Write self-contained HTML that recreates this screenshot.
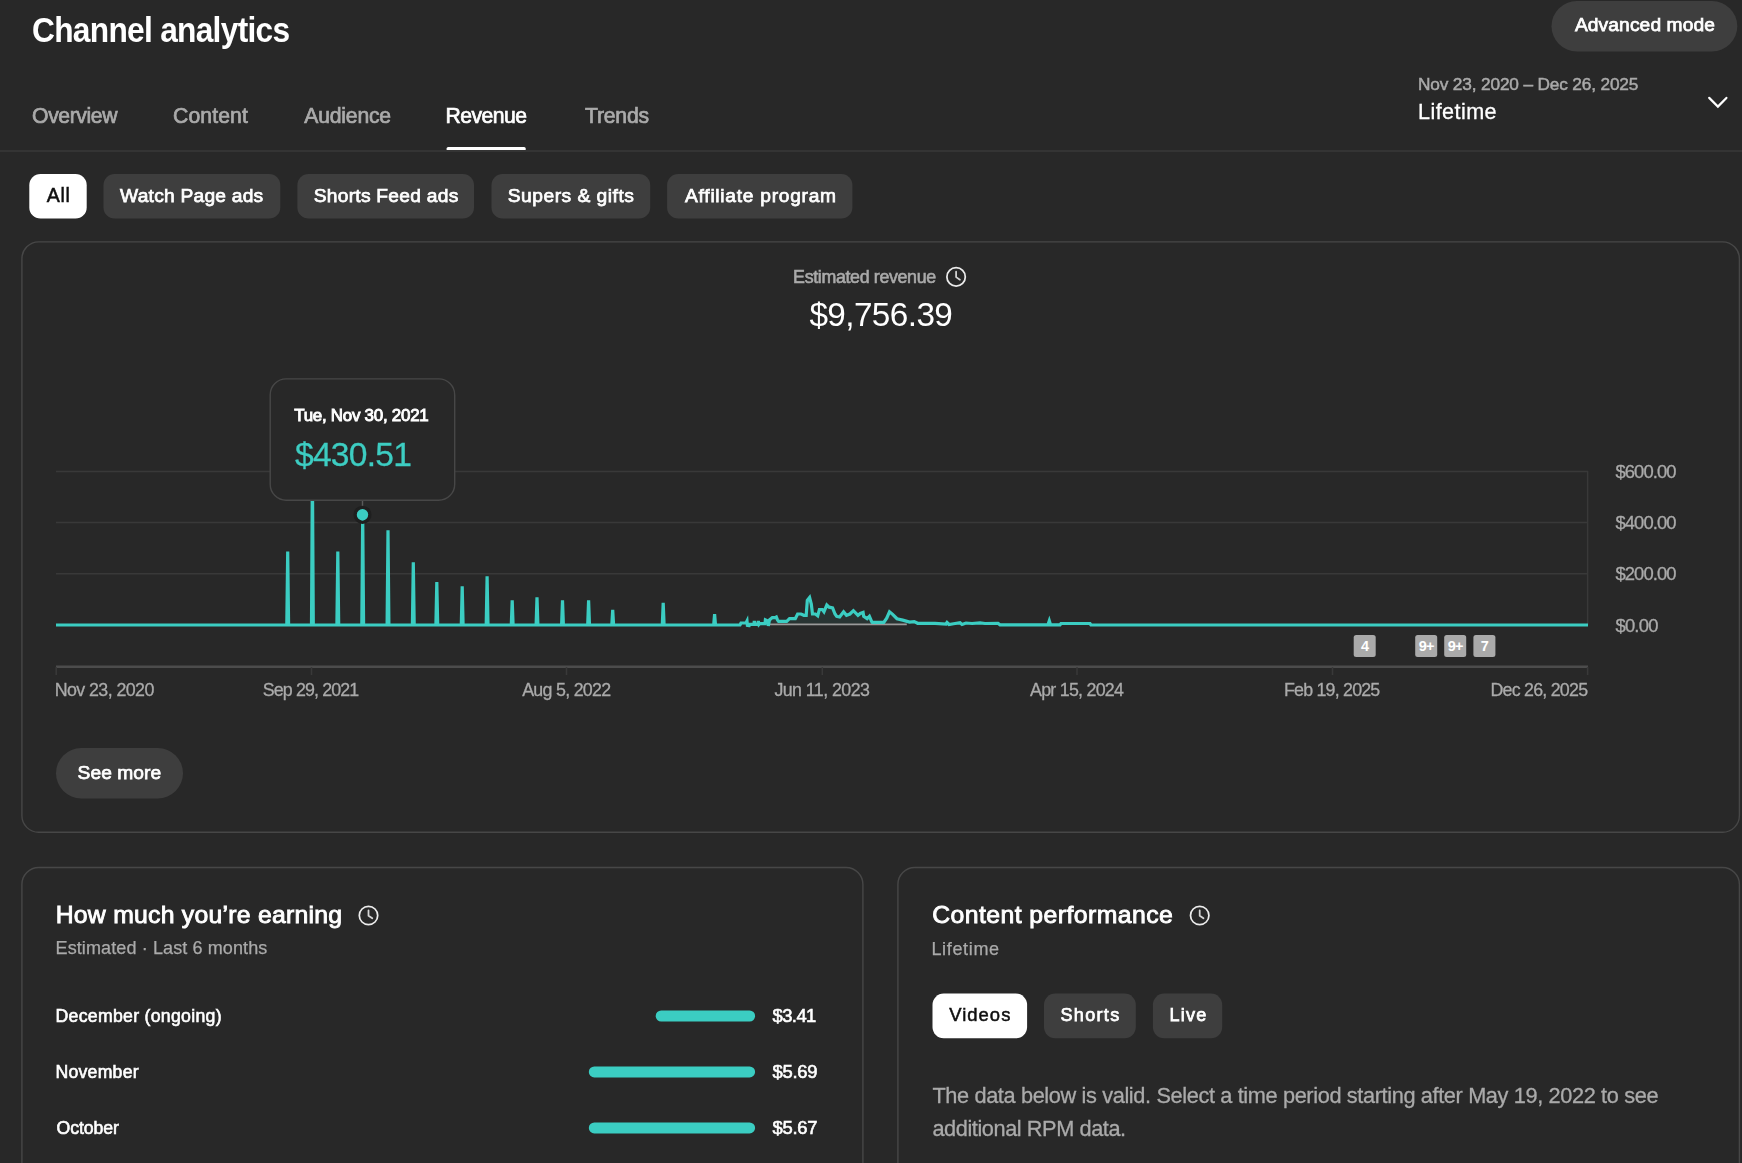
<!DOCTYPE html>
<html><head><meta charset="utf-8"><title>Channel analytics</title>
<style>
html,body{margin:0;padding:0}
body{width:1742px;height:1163px;overflow:hidden;background:#282828;position:relative;font-family:"Liberation Sans",sans-serif}
svg text{white-space:pre}
</style></head><body>
<svg width="1742" height="1163" style="position:absolute;left:0;top:0"><line x1="0" y1="151" x2="1742" y2="151" stroke="#383838" stroke-width="1.4"/><path d="M446.6,150 V148.6 Q446.6,147 448.2,147 H524.1 Q525.7,147 525.7,148.6 V150 Z" fill="#fff"/><rect x="29.3" y="174" width="57.4" height="44.6" rx="11.2" fill="#fff"/><rect x="103.5" y="174" width="176.8" height="44.6" rx="11.2" fill="#3e3e3e"/><rect x="297.4" y="174" width="176.6" height="44.6" rx="11.2" fill="#3e3e3e"/><rect x="491.5" y="174" width="158.7" height="44.6" rx="11.2" fill="#3e3e3e"/><rect x="667.1" y="174" width="185.3" height="44.6" rx="11.2" fill="#3e3e3e"/><rect x="1551.5" y="1" width="185.8" height="50.4" rx="25.2" fill="#3e3e3e"/><rect x="21.9" y="241.9" width="1717.5" height="590.4" rx="16.8" fill="none" stroke="#474747" stroke-width="1.4"/><rect x="21.9" y="867.5" width="841" height="420" rx="16.8" fill="none" stroke="#474747" stroke-width="1.4"/><rect x="897.9" y="867.5" width="841.5" height="420" rx="16.8" fill="none" stroke="#474747" stroke-width="1.4"/><rect x="56" y="748" width="127" height="50.4" rx="25.2" fill="#3e3e3e"/><rect x="655.7" y="1010.5" width="99.4" height="11" rx="5.5" fill="#3bcdc2"/><rect x="588.8" y="1066.4" width="166.3" height="11" rx="5.5" fill="#3bcdc2"/><rect x="588.8" y="1122.4" width="166.3" height="11" rx="5.5" fill="#3bcdc2"/><rect x="932.5" y="993.6" width="94.6" height="44.7" rx="11.2" fill="#fff"/><rect x="1044" y="993.6" width="91.8" height="44.7" rx="11.2" fill="#3e3e3e"/><rect x="1152.9" y="993.6" width="69.3" height="44.7" rx="11.2" fill="#3e3e3e"/><line x1="56" y1="471.4" x2="1588" y2="471.4" stroke="#393939" stroke-width="1.5"/><line x1="56" y1="522.6" x2="1588" y2="522.6" stroke="#393939" stroke-width="1.5"/><line x1="56" y1="573.8" x2="1588" y2="573.8" stroke="#393939" stroke-width="1.5"/><line x1="1587.6" y1="471" x2="1587.6" y2="625" stroke="#393939" stroke-width="1.4"/><line x1="56" y1="666.8" x2="1588" y2="666.8" stroke="#4c4c4c" stroke-width="2.4"/><line x1="56.2" y1="667" x2="56.2" y2="675" stroke="#393939" stroke-width="1.5"/><line x1="311.5" y1="667" x2="311.5" y2="675" stroke="#393939" stroke-width="1.5"/><line x1="566.5" y1="667" x2="566.5" y2="675" stroke="#393939" stroke-width="1.5"/><line x1="822.3" y1="667" x2="822.3" y2="675" stroke="#393939" stroke-width="1.5"/><line x1="1077" y1="667" x2="1077" y2="675" stroke="#393939" stroke-width="1.5"/><line x1="1332.5" y1="667" x2="1332.5" y2="675" stroke="#393939" stroke-width="1.5"/><line x1="1587.6" y1="667" x2="1587.6" y2="675" stroke="#393939" stroke-width="1.5"/><path d="M740,623.5 L740.0,625.0 L741.0,623.0 L746.0,623.0 L747.0,621.0 L747.5,626.7 L748.5,623.5 L748.8,626.7 L749.5,624.4 L754.0,624.4 L754.3,621.0 L755.0,624.4 L758.0,624.4 L758.3,621.0 L759.0,624.4 L759.8,623.6 L765.0,623.6 L765.4,619.9 L768.0,621.0 L768.3,626.0 L769.5,619.9 L772.3,617.6 L775.0,617.6 L776.3,617.0 L777.5,619.9 L778.6,621.3 L786.7,621.3 L789.5,618.7 L795.3,618.7 L797.6,614.0 L801.0,614.0 L803.9,615.3 L806.2,615.3 L807.3,600.3 L809.6,597.5 L811.3,604.0 L812.5,614.0 L815.4,614.0 L817.7,615.8 L819.4,609.5 L822.3,609.5 L824.0,611.8 L826.8,605.0 L829.1,607.2 L832.6,607.8 L835.0,614.0 L836.7,616.4 L839.6,617.0 L843.6,611.8 L846.5,615.3 L849.9,614.0 L853.4,610.7 L858.0,615.3 L860.3,613.5 L863.1,612.4 L863.7,616.4 L867.1,618.7 L869.4,616.4 L871.7,621.6 L872.3,622.4 L883.8,622.4 L886.7,618.1 L889.5,611.8 L892.4,614.1 L897.0,618.7 L902.7,620.1 L909.6,622.1 L914.2,621.6 L917.7,623.3 L935.0,623.3 L935.0,623.3 L946.0,624.0 L947.0,622.5 L949.0,624.5 L955.0,623.5 L960.0,622.8 L962.0,624.5 L966.0,623.0 L972.0,623.5 L980.0,622.8 L985.0,623.5 L998.0,623.3 L1000.0,624.8 L1048.0,624.8 L1049.3,620.8 L1050.5,624.8 L1060.0,624.8 L1061.0,623.5 L1090.0,623.5 L1091.0,625.0 L1091,623.5 Z" fill="#3bcdc2" fill-opacity="0.08"/><line x1="769.4" y1="624.4" x2="906.8" y2="624.4" stroke="#9a9a9a" stroke-width="1.6"/><path d="M56.0,625.0 L286.8,625.0 L287.7,551.4 L288.6,625.0 L311.5,625.0 L312.4,470.0 L313.3,625.0 L336.9,625.0 L337.8,551.4 L338.7,625.0 L361.8,625.0 L362.7,515.0 L363.6,625.0 L387.1,625.0 L388.0,530.3 L388.9,625.0 L412.4,625.0 L413.3,562.2 L414.2,625.0 L435.9,625.0 L436.8,582.1 L437.7,625.0 L461.3,625.0 L462.2,586.2 L463.1,625.0 L486.2,625.0 L487.1,576.4 L488.0,625.0 L511.3,625.0 L512.2,600.2 L513.1,625.0 L536.1,625.0 L537.0,597.3 L537.9,625.0 L561.6,625.0 L562.5,600.2 L563.4,625.0 L587.7,625.0 L588.6,600.2 L589.5,625.0 L611.8,625.0 L612.7,609.8 L613.6,625.0 L662.3,625.0 L663.2,602.7 L664.1,625.0 L713.7,625.0 L714.6,614.1 L715.5,625.0 L740.0,625.0 L741.0,623.0 L746.0,623.0 L747.0,621.0 L747.5,626.7 L748.5,623.5 L748.8,626.7 L749.5,624.4 L754.0,624.4 L754.3,621.0 L755.0,624.4 L758.0,624.4 L758.3,621.0 L759.0,624.4 L759.8,623.6 L765.0,623.6 L765.4,619.9 L768.0,621.0 L768.3,626.0 L769.5,619.9 L772.3,617.6 L775.0,617.6 L776.3,617.0 L777.5,619.9 L778.6,621.3 L786.7,621.3 L789.5,618.7 L795.3,618.7 L797.6,614.0 L801.0,614.0 L803.9,615.3 L806.2,615.3 L807.3,600.3 L809.6,597.5 L811.3,604.0 L812.5,614.0 L815.4,614.0 L817.7,615.8 L819.4,609.5 L822.3,609.5 L824.0,611.8 L826.8,605.0 L829.1,607.2 L832.6,607.8 L835.0,614.0 L836.7,616.4 L839.6,617.0 L843.6,611.8 L846.5,615.3 L849.9,614.0 L853.4,610.7 L858.0,615.3 L860.3,613.5 L863.1,612.4 L863.7,616.4 L867.1,618.7 L869.4,616.4 L871.7,621.6 L872.3,622.4 L883.8,622.4 L886.7,618.1 L889.5,611.8 L892.4,614.1 L897.0,618.7 L902.7,620.1 L909.6,622.1 L914.2,621.6 L917.7,623.3 L935.0,623.3 L935.0,623.3 L946.0,624.0 L947.0,622.5 L949.0,624.5 L955.0,623.5 L960.0,622.8 L962.0,624.5 L966.0,623.0 L972.0,623.5 L980.0,622.8 L985.0,623.5 L998.0,623.3 L1000.0,624.8 L1048.0,624.8 L1049.3,620.8 L1050.5,624.8 L1060.0,624.8 L1061.0,623.5 L1090.0,623.5 L1091.0,625.0 L1588.0,625.0" fill="none" stroke="#3bcdc2" stroke-width="3.2"/><line x1="362.5" y1="500" x2="362.5" y2="506" stroke="#5a5a5a" stroke-width="1.4"/><circle cx="362.5" cy="514.8" r="7.4" fill="none" stroke="#1f1f1f" stroke-width="3.4"/><circle cx="362.5" cy="514.8" r="5.7" fill="#3bcdc2"/><polyline points="1709.2,97.9 1717.9,106.6 1726.4,97.9" fill="none" stroke="#fff" stroke-width="2.2" stroke-linecap="round"/><circle cx="956.1" cy="276.9" r="9.2" fill="none" stroke="#ececec" stroke-width="1.75"/><polyline points="956.1,271.7 956.1,277.09999999999997 959.9,279.7" fill="none" stroke="#d6d6d6" stroke-width="1.75" stroke-linecap="round" stroke-linejoin="round"/><circle cx="368.5" cy="915.5" r="9.2" fill="none" stroke="#ececec" stroke-width="1.75"/><polyline points="368.5,910.3 368.5,915.7 372.3,918.3" fill="none" stroke="#d6d6d6" stroke-width="1.75" stroke-linecap="round" stroke-linejoin="round"/><circle cx="1199.7" cy="915.5" r="9.2" fill="none" stroke="#ececec" stroke-width="1.75"/><polyline points="1199.7,910.3 1199.7,915.7 1203.5,918.3" fill="none" stroke="#d6d6d6" stroke-width="1.75" stroke-linecap="round" stroke-linejoin="round"/><rect x="270.2" y="378.9" width="184.5" height="121.3" rx="16" fill="#282828" stroke="#474747" stroke-width="1.4"/><rect x="1353.7" y="635" width="22" height="22" rx="2.5" fill="#aaaaaa"/><text x="1364.7" y="651" text-anchor="middle" font-family="Liberation Sans, sans-serif" font-weight="bold" font-size="14.5" letter-spacing="-0.8" fill="#fff">4</text><rect x="1415.2" y="635" width="22" height="22" rx="2.5" fill="#aaaaaa"/><text x="1426.2" y="651" text-anchor="middle" font-family="Liberation Sans, sans-serif" font-weight="bold" font-size="14.5" letter-spacing="-0.8" fill="#fff">9+</text><rect x="1444.2" y="635" width="22" height="22" rx="2.5" fill="#aaaaaa"/><text x="1455.2" y="651" text-anchor="middle" font-family="Liberation Sans, sans-serif" font-weight="bold" font-size="14.5" letter-spacing="-0.8" fill="#fff">9+</text><rect x="1473.4" y="635" width="22" height="22" rx="2.5" fill="#aaaaaa"/><text x="1484.4" y="651" text-anchor="middle" font-family="Liberation Sans, sans-serif" font-weight="bold" font-size="14.5" letter-spacing="-0.8" fill="#fff">7</text></svg>
<svg width="1742" height="1163" style="position:absolute;left:0;top:0;will-change:transform" font-family="Liberation Sans, sans-serif"><text id="T_title" x="32.00" y="42" font-size="35.65" font-weight="bold" fill="#ffffff" letter-spacing="-0.800" transform="translate(32.00 0) scale(0.8896 1) translate(-32.00 0)">Channel analytics</text><text id="T_t1" x="32.10" y="123" font-size="21.16" font-weight="normal" fill="#aaaaaa" letter-spacing="-0.400" stroke="#aaaaaa" stroke-width="0.7">Overview</text><text id="T_t2" x="173.00" y="123" font-size="21.16" font-weight="normal" fill="#aaaaaa" letter-spacing="0.133" stroke="#aaaaaa" stroke-width="0.7">Content</text><text id="T_t3" x="304.30" y="123" font-size="21.16" font-weight="normal" fill="#aaaaaa" letter-spacing="-0.200" stroke="#aaaaaa" stroke-width="0.7">Audience</text><text id="T_t4" x="445.60" y="123" font-size="21.16" font-weight="normal" fill="#ffffff" letter-spacing="-0.533" stroke="#ffffff" stroke-width="0.7">Revenue</text><text id="T_t5" x="585.00" y="123" font-size="21.16" font-weight="normal" fill="#aaaaaa" letter-spacing="-0.200" stroke="#aaaaaa" stroke-width="0.7">Trends</text><text id="T_c1" x="46.80" y="202" font-size="19.57" font-weight="normal" fill="#0f0f0f" letter-spacing="0.700" stroke="#0f0f0f" stroke-width="0.5">All</text><text id="T_c2" x="120.10" y="202" font-size="19.20" font-weight="normal" fill="#ffffff" letter-spacing="0.231" stroke="#ffffff" stroke-width="0.75">Watch Page ads</text><text id="T_c3" x="313.70" y="202" font-size="19.20" font-weight="normal" fill="#ffffff" letter-spacing="0.271" stroke="#ffffff" stroke-width="0.75">Shorts Feed ads</text><text id="T_c4" x="507.80" y="202" font-size="19.20" font-weight="normal" fill="#ffffff" letter-spacing="0.508" stroke="#ffffff" stroke-width="0.75">Supers &amp; gifts</text><text id="T_c5" x="685.10" y="202" font-size="19.20" font-weight="normal" fill="#ffffff" letter-spacing="0.725" stroke="#ffffff" stroke-width="0.75">Affiliate program</text><text id="T_adv" x="1574.90" y="31" font-size="19.20" font-weight="normal" fill="#ffffff" letter-spacing="0.117" stroke="#ffffff" stroke-width="0.75">Advanced mode</text><text id="T_range" x="1418.00" y="90" font-size="17.25" font-weight="normal" fill="#aaaaaa" letter-spacing="-0.154" stroke="#aaaaaa" stroke-width="0.5">Nov 23, 2020 – Dec 26, 2025</text><text id="T_life" x="1418.00" y="119" font-size="21.59" font-weight="normal" fill="#ffffff" letter-spacing="0.429" stroke="#ffffff" stroke-width="0.3">Lifetime</text><text id="T_estrev" x="793.10" y="283" font-size="17.83" font-weight="normal" fill="#aaaaaa" letter-spacing="-0.350" stroke="#aaaaaa" stroke-width="0.6">Estimated revenue</text><text id="T_total" x="809.40" y="326" font-size="33.33" font-weight="normal" fill="#ffffff" letter-spacing="-0.600">$9,756.39</text><text id="T_ttdate" x="294.20" y="421" font-size="16.96" font-weight="normal" fill="#ffffff" letter-spacing="-0.262" stroke="#ffffff" stroke-width="0.9">Tue, Nov 30, 2021</text><text id="T_ttval" x="295.00" y="466" font-size="33.62" font-weight="normal" fill="#3dcdc2" letter-spacing="-0.767" stroke="#3dcdc2" stroke-width="0.3">$430.51</text><text id="T_y600" x="1615.40" y="478" font-size="18.41" font-weight="normal" fill="#aaaaaa" letter-spacing="-0.900" stroke="#aaaaaa" stroke-width="0.3">$600.00</text><text id="T_y400" x="1615.40" y="529" font-size="18.41" font-weight="normal" fill="#aaaaaa" letter-spacing="-0.900" stroke="#aaaaaa" stroke-width="0.3">$400.00</text><text id="T_y200" x="1615.40" y="580" font-size="18.41" font-weight="normal" fill="#aaaaaa" letter-spacing="-0.900" stroke="#aaaaaa" stroke-width="0.3">$200.00</text><text id="T_y0" x="1615.40" y="632" font-size="18.41" font-weight="normal" fill="#aaaaaa" letter-spacing="-0.750" stroke="#aaaaaa" stroke-width="0.3">$0.00</text><text id="T_x0" x="54.70" y="696" font-size="17.83" font-weight="normal" fill="#aaaaaa" letter-spacing="-0.582" stroke="#aaaaaa" stroke-width="0.3">Nov 23, 2020</text><text id="T_x1" x="262.80" y="696" font-size="17.83" font-weight="normal" fill="#aaaaaa" letter-spacing="-0.873" stroke="#aaaaaa" stroke-width="0.3">Sep 29, 2021</text><text id="T_x2" x="522.20" y="696" font-size="17.83" font-weight="normal" fill="#aaaaaa" letter-spacing="-0.720" stroke="#aaaaaa" stroke-width="0.3">Aug 5, 2022</text><text id="T_x3" x="774.40" y="696" font-size="17.83" font-weight="normal" fill="#aaaaaa" letter-spacing="-0.564" stroke="#aaaaaa" stroke-width="0.3">Jun 11, 2023</text><text id="T_x4" x="1030.00" y="696" font-size="17.83" font-weight="normal" fill="#aaaaaa" letter-spacing="-0.745" stroke="#aaaaaa" stroke-width="0.3">Apr 15, 2024</text><text id="T_x5" x="1284.00" y="696" font-size="17.83" font-weight="normal" fill="#aaaaaa" letter-spacing="-0.800" stroke="#aaaaaa" stroke-width="0.3">Feb 19, 2025</text><text id="T_x6" x="1490.40" y="696" font-size="17.83" font-weight="normal" fill="#aaaaaa" letter-spacing="-0.764" stroke="#aaaaaa" stroke-width="0.3">Dec 26, 2025</text><text id="T_seemore" x="77.60" y="779" font-size="19.20" font-weight="normal" fill="#ffffff" letter-spacing="0.057" stroke="#ffffff" stroke-width="0.75">See more</text><text id="T_h1" x="55.70" y="923" font-size="24.78" font-weight="normal" fill="#ffffff" letter-spacing="0.255" stroke="#ffffff" stroke-width="0.9">How much you’re earning</text><text id="T_s1" x="55.50" y="954" font-size="18.04" font-weight="normal" fill="#aaaaaa" letter-spacing="0.100" stroke="#aaaaaa" stroke-width="0.25">Estimated · Last 6 months</text><text id="T_m1" x="55.50" y="1022" font-size="17.68" font-weight="normal" fill="#ffffff" letter-spacing="0.294" stroke="#ffffff" stroke-width="0.6">December (ongoing)</text><text id="T_m2" x="55.50" y="1078" font-size="17.68" font-weight="normal" fill="#ffffff" letter-spacing="0.229" stroke="#ffffff" stroke-width="0.6">November</text><text id="T_m3" x="56.50" y="1134" font-size="17.68" font-weight="normal" fill="#ffffff" letter-spacing="-0.067" stroke="#ffffff" stroke-width="0.6">October</text><text id="T_v1" x="772.50" y="1022" font-size="18.41" font-weight="normal" fill="#ffffff" letter-spacing="-0.550" stroke="#ffffff" stroke-width="0.6">$3.41</text><text id="T_v2" x="772.50" y="1078" font-size="18.41" font-weight="normal" fill="#ffffff" letter-spacing="-0.250" stroke="#ffffff" stroke-width="0.6">$5.69</text><text id="T_v3" x="772.50" y="1134" font-size="18.41" font-weight="normal" fill="#ffffff" letter-spacing="-0.250" stroke="#ffffff" stroke-width="0.6">$5.67</text><text id="T_h2" x="932.20" y="923" font-size="24.78" font-weight="normal" fill="#ffffff" letter-spacing="0.444" stroke="#ffffff" stroke-width="0.9">Content performance</text><text id="T_s2" x="931.40" y="955" font-size="18.04" font-weight="normal" fill="#aaaaaa" letter-spacing="0.657" stroke="#aaaaaa" stroke-width="0.25">Lifetime</text><text id="T_k1" x="949.20" y="1021" font-size="18.41" font-weight="normal" fill="#0f0f0f" letter-spacing="1.040" stroke="#0f0f0f" stroke-width="0.5">Videos</text><text id="T_k2" x="1060.50" y="1021" font-size="18.04" font-weight="normal" fill="#ffffff" letter-spacing="1.320" stroke="#ffffff" stroke-width="0.75">Shorts</text><text id="T_k3" x="1169.60" y="1021" font-size="18.04" font-weight="normal" fill="#ffffff" letter-spacing="1.200" stroke="#ffffff" stroke-width="0.75">Live</text><text id="T_p1" x="932.40" y="1103" font-size="21.74" font-weight="normal" fill="#aaaaaa" letter-spacing="-0.367" stroke="#aaaaaa" stroke-width="0.3">The data below is valid. Select a time period starting after May 19, 2022 to see</text><text id="T_p2" x="932.40" y="1136" font-size="21.74" font-weight="normal" fill="#aaaaaa" letter-spacing="-0.421" stroke="#aaaaaa" stroke-width="0.3">additional RPM data.</text></svg>
</body></html>
